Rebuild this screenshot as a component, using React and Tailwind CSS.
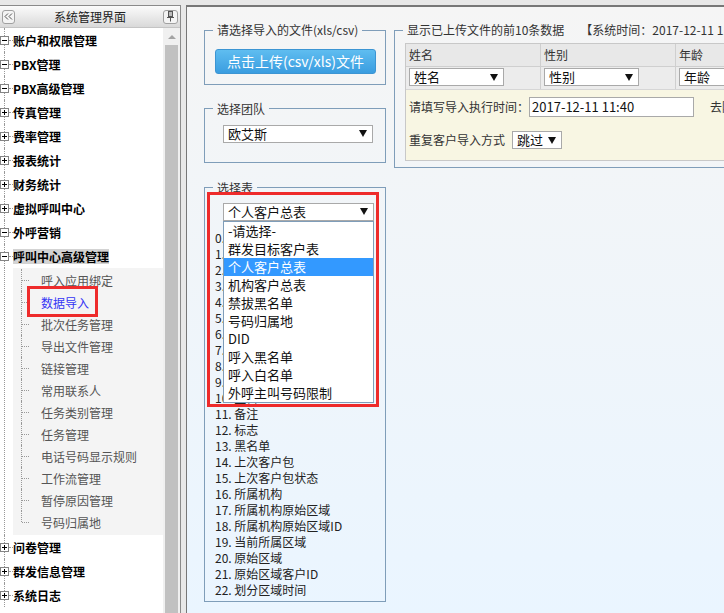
import React from 'react';

const font = { fontFamily: '"Noto Sans CJK SC", "Noto Sans", sans-serif' };

const topA = [
  { name: '账户和权限管理', open: true },
  { name: 'PBX管理', open: true },
  { name: 'PBX高级管理', open: true },
  { name: '传真管理' },
  { name: '费率管理' },
  { name: '报表统计' },
  { name: '财务统计' },
  { name: '虚拟呼叫中心' },
  { name: '外呼营销', open: true },
];

const subItems = [
  '呼入应用绑定', '数据导入', '批次任务管理', '导出文件管理', '链接管理', '常用联系人',
  '任务类别管理', '任务管理', '电话号码显示规则', '工作流管理', '暂停原因管理', '号码归属地',
];

const topB = ['问卷管理', '群发信息管理', '系统日志'];

const options = [
  '-请选择-', '群发目标客户表', '个人客户总表', '机构客户总表', '禁拔黑名单',
  '号码归属地', 'DID', '呼入黑名单', '呼入白名单', '外呼主叫号码限制',
];

const fields = [
  '姓名', '性别', '年龄', '电话', '手机', '地址', '邮箱', '公司', '职位', 'QQ', '生日',
  '备注', '标志', '黑名单', '上次客户包', '上次客户包状态', '所属机构', '所属机构原始区域',
  '所属机构原始区域ID', '当前所属区域', '原始区域', '原始区域客户ID', '划分区域时间',
];

function Expander({ open }) {
  return (
    <span className="absolute left-0 top-[8px] w-[9px] h-[9px] border border-[#848484] bg-white flex items-center justify-center">
      <span className="absolute w-[5px] h-[1px] bg-black" />
      {!open && <span className="absolute w-[1px] h-[5px] bg-black" />}
    </span>
  );
}

function TopRow({ name, open, active }) {
  return (
    <div className="flex h-[24px] items-center">
      <div className="relative w-[13px] h-full shrink-0">
        <span className="absolute left-[4px] top-0 bottom-0 border-l border-dotted border-[#999]" />
        <span className="absolute left-[9px] top-[12px] w-[4px] border-t border-dotted border-[#999]" />
        <Expander open={open} />
      </div>
      <span
        className={`text-[12px] leading-[15px] font-bold text-black whitespace-nowrap ${active ? 'bg-[#d3d3d3]' : ''}`}
      >
        {name}
      </span>
    </div>
  );
}

function SubRow({ name, current, last }) {
  return (
    <div className="relative flex h-[22px] items-center">
      <div className="relative w-[28px] h-full shrink-0">
        <span
          className={`absolute left-[8px] top-0 border-l border-dotted border-[#999] ${last ? 'h-[11px]' : 'bottom-0'}`}
        />
        <span className="absolute left-[9px] top-[11px] w-[7px] border-t border-dotted border-[#999]" />
      </div>
      <span className={`text-[12px] leading-[15px] whitespace-nowrap ${current ? 'text-[#3535f5]' : 'text-[#555]'}`}>
        {name}
      </span>
      {current && (
        <span className="absolute left-[14px] top-[-5px] w-[71px] h-[31px] border-[3px] border-[#ee2b2b]" />
      )}
    </div>
  );
}

function Sel({ text, className }) {
  return (
    <div
      className={`flex items-center justify-between bg-white border border-[#a9a9a9] h-[18px] pl-[4px] pr-[5px] text-[13px] leading-[16px] text-[#111] ${className}`}
    >
      <span className="whitespace-nowrap">{text}</span>
      <span className="w-0 h-0 border-x-[4px] border-x-transparent border-t-[7px] border-t-[#111]" />
    </div>
  );
}

function Sidebar() {
  return (
    <div className="w-[181px] h-full shrink-0 flex flex-col border-t border-r border-[#8a8a8a] bg-white">
      <div className="h-[22px] flex items-center justify-between px-[2px] bg-[linear-gradient(to_bottom,#fbfbfb,#d9d9d9)] border-b border-[#c4c4c4]">
        <span className="w-[13px] h-[14px] rounded-[3px] border border-[#a0a0a0] bg-[#f4f4f4] flex items-center justify-center">
          <svg width="9" height="7" viewBox="0 0 9 7">
            <path d="M4 0.5 L1 3.5 L4 6.5 M8 0.5 L5 3.5 L8 6.5" fill="none" stroke="#555" strokeWidth="1" />
          </svg>
        </span>
        <span className="text-[12px] leading-[16px] text-[#222] pl-[2px]">系统管理界面</span>
        <span className="w-[15px] h-[14px] rounded-[3px] border border-[#a0a0a0] bg-[#f4f4f4] flex items-center justify-center">
          <svg width="9" height="11" viewBox="0 0 9 11">
            <rect x="2.5" y="0.5" width="4" height="5" fill="#bbb" stroke="#555" />
            <path d="M1 6.5 H8 M4.5 6.5 V10.5" stroke="#555" strokeWidth="1" />
          </svg>
        </span>
      </div>
      <div className="flex flex-1 min-h-0">
        <div className="w-[163px] overflow-hidden">
          {topA.map((t) => (
            <TopRow key={t.name} name={t.name} open={t.open} />
          ))}
          <TopRow name="呼叫中心高级管理" open active />
          <div className="flex">
            <div className="relative w-[13px] shrink-0">
              <span className="absolute left-[4px] top-0 bottom-0 border-l border-dotted border-[#999]" />
            </div>
            <div className="flex-1 bg-[#f4f4f4] pt-[1px] pb-[2px]">
              {subItems.map((s, i) => (
                <SubRow key={s} name={s} current={s === '数据导入'} last={i === subItems.length - 1} />
              ))}
            </div>
          </div>
          {topB.map((t) => (
            <TopRow key={t} name={t} />
          ))}
        </div>
        <div className="w-[17px] bg-[#f0f0f0] flex flex-col items-center">
          <div className="h-[17px] flex items-center justify-center">
            <span className="w-0 h-0 border-x-[4px] border-x-transparent border-b-[4px] border-b-[#a3a3a3]" />
          </div>
          <div className="flex-1 w-[13px] bg-[#c1c1c1]" />
        </div>
      </div>
    </div>
  );
}

function Legend({ children }) {
  return <legend className="px-[4px] text-[12px] leading-[16px] text-[#333]">{children}</legend>;
}

function LeftColumn() {
  return (
    <div className="w-[182px] shrink-0 flex flex-col">
      <fieldset className="border border-[#7f9db9] pl-[8px] pt-[10px] pb-[10px]">
        <Legend>请选择导入的文件(xls/csv)</Legend>
        <button className="ml-[2px] w-[161px] h-[25px] rounded-[3px] border border-[#3c95d3] bg-[linear-gradient(to_bottom,#5fbdf0,#3a9de0)] text-white text-[14px] leading-[20px]">
          点击上传(csv/xls)文件
        </button>
      </fieldset>

      <fieldset className="mt-[16px] border border-[#7f9db9] pl-[8px] pt-[8px] pb-[19px]">
        <Legend>选择团队</Legend>
        <Sel text="欧艾斯" className="ml-[10px] w-[150px]" />
      </fieldset>

      <fieldset className="mt-[17px] border border-[#7f9db9] pl-[8px] pt-[7px] pb-[3px]">
        <Legend>选择表</Legend>
        <div className="relative ml-[10px] w-[151px]">
          <Sel text="个人客户总表" className="w-[151px] border-[#6f9fd6]" />
          <div className="absolute left-0 top-[18px] w-[151px] bg-white border border-[#7f9db9] z-10">
            {options.map((o) => (
              <div
                key={o}
                className={`h-[18px] pl-[4px] text-[13px] leading-[18px] whitespace-nowrap ${o === '个人客户总表' ? 'bg-[#3399ff] text-white' : 'text-[#111]'}`}
              >
                {o}
              </div>
            ))}
          </div>
        </div>
        <div className="mt-[9px] ml-[2px]">
          {fields.map((f, i) => (
            <div key={f} className="h-[16px] text-[12px] leading-[16px] text-[#222] whitespace-nowrap">
              {i}. {f}
            </div>
          ))}
        </div>
      </fieldset>
    </div>
  );
}

function RightColumn() {
  const cols = [
    { h: '姓名' },
    { h: '性别' },
    { h: '年龄' },
    { h: '电话' },
  ];
  return (
    <div className="ml-[8px] shrink-0">
      <fieldset className="w-[600px] border border-[#7f9db9] pl-[8px] pt-[5px] pb-[6px]">
        <legend className="px-[4px] text-[12px] leading-[16px] text-[#333] whitespace-nowrap">
          显示已上传文件的前10条数据
          <span className="ml-[16px]">【系统时间：2017-12-11 11:40:05】</span>
        </legend>
        <div className="ml-[2px] border border-[#c8c8c8] w-[560px]">
          <div className="flex h-[23px] bg-[#e8e8e8] border-b border-[#cfcfcf]">
            {cols.map((c) => (
              <div key={c.h} className="w-[135px] shrink-0 border-r border-[#cfcfcf] pl-[3px] text-[12px] leading-[22px] text-[#333]">
                {c.h}
              </div>
            ))}
          </div>
          <div className="flex h-[23px] bg-[#ececec] border-b border-[#d6d6d6]">
            {cols.map((c) => (
              <div key={c.h} className="w-[135px] shrink-0 border-r border-[#cfcfcf] pl-[3px] pt-[1px]">
                <Sel text={c.h} className="w-[95px]" />
              </div>
            ))}
          </div>
          <div className="bg-[#f8f6e3] pl-[3px] pt-[7px] pb-[11px]">
            <div className="flex items-center h-[20px]">
              <span className="text-[12px] leading-[16px] text-[#333] whitespace-nowrap">请填写导入执行时间：</span>
              <div className="w-[165px] h-[20px] bg-white border border-[#a9a9a9] pl-[2px] text-[13px] leading-[18px] text-[#111]">
                2017-12-11 11:40
              </div>
              <span className="ml-[16px] text-[12px] leading-[16px] text-[#333] whitespace-nowrap">去除重复号码</span>
            </div>
            <div className="flex items-center mt-[14px]">
              <span className="text-[12px] leading-[16px] text-[#333] whitespace-nowrap">重复客户导入方式</span>
              <Sel text="跳过" className="ml-[7px] w-[50px]" />
            </div>
          </div>
        </div>
      </fieldset>
    </div>
  );
}

export default function App() {
  return (
    <div className="h-[613px] w-full flex bg-[#e8e8e8] pt-[5px] overflow-hidden" style={font}>
      <Sidebar />
      <div className="w-[5px] shrink-0" />
      <div className="relative flex-1 h-full min-w-0 overflow-hidden border-t-2 border-l border-[#777] bg-[linear-gradient(to_bottom,#f5f5f5,#eaf5ff)]">
        <div className="flex pl-[17px] pt-[15px]">
          <LeftColumn />
          <RightColumn />
        </div>
        <div className="absolute left-[20px] top-[185px] w-[172px] h-[215px] border-[3px] border-[#ee2b2b] z-20 pointer-events-none" />
      </div>
    </div>
  );
}
